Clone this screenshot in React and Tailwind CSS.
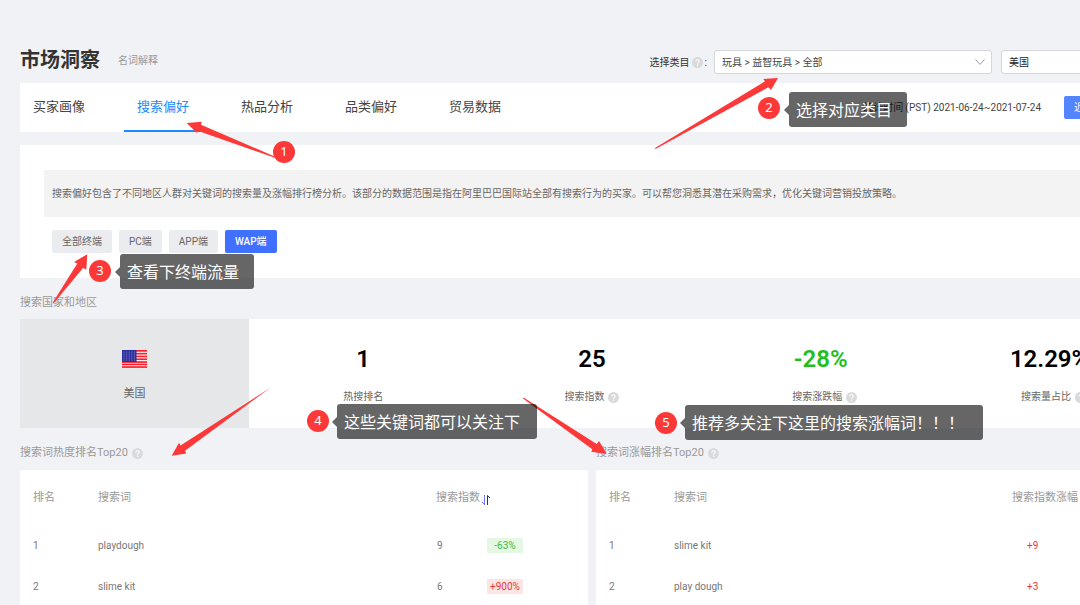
import React from "react";

const tabs = ["买家画像", "搜索偏好", "热品分析", "品类偏好", "贸易数据"];
const terminals = ["全部终端", "PC端", "APP端", "WAP端"];

const stats = [
  { value: "1", label: "热搜排名", help: false, color: "text-black", inset: "" },
  { value: "25", label: "搜索指数", help: true, color: "text-black", inset: "" },
  { value: "-28%", label: "搜索涨跌幅", help: true, color: "text-[#1fbf1f]", inset: "pl-2" },
  { value: "12.29%", label: "搜索量占比", help: true, color: "text-black", inset: "pl-2" },
];

const hotWords = [
  { rank: 1, word: "playdough", index: 9, change: "-63%", tone: "bg-[#e4f8e4] text-[#3fb83f]" },
  { rank: 2, word: "slime kit", index: 6, change: "+900%", tone: "bg-[#fde5e5] text-[#e03a3a]" },
];

const risingWords = [
  { rank: 1, word: "slime kit", change: "+9" },
  { rank: 2, word: "play dough", change: "+3" },
];

function Help() {
  return (
    <svg viewBox="0 0 12 12" className="h-[11px] w-[11px] shrink-0" aria-hidden="true">
      <circle cx="6" cy="6" r="6" fill="#d9dadc" />
      <path d="M4.2 4.8a1.8 1.7 0 1 1 2.7 1.4c-.6.35-.9.6-.9 1.2" fill="none" stroke="#fff" strokeWidth="1.1" />
      <circle cx="6" cy="9" r="0.7" fill="#fff" />
    </svg>
  );
}

function Flag() {
  return (
    <svg viewBox="0 0 25 18" className="h-[18px] w-[25px]" aria-hidden="true">
      <rect width="25" height="18" fill="#fff" />
      {[0, 2.8, 5.6, 8.4, 11.2, 13.6, 16.2].map((y) => (
        <rect key={y} y={y} width="25" height="1.7" fill="#fb1f2b" />
      ))}
      <rect width="14.5" height="12" fill="#2b2f9c" />
      {[2, 4, 6, 8, 10].map((y) =>
        [2, 4.6, 7.2, 9.8, 12.4].map((x) => (
          <circle key={x + "-" + y} cx={x} cy={y} r="0.6" fill="#8d90d8" />
        ))
      )}
    </svg>
  );
}

function Badge({ n, place }) {
  return (
    <span
      className={
        "absolute flex h-[22px] w-[22px] items-center justify-center rounded-full bg-[#fd3838] pb-[2px] font-['Noto_Sans',sans-serif] text-[13px] leading-none text-white " +
        place
      }
    >
      {n}
    </span>
  );
}

function Note({ children, place }) {
  return (
    <span
      className={
        "absolute flex h-[35px] items-center rounded-[3px] bg-black/60 pt-[2px] pl-[7px] text-[16px] leading-none whitespace-nowrap text-white " +
        place
      }
    >
      <svg viewBox="0 0 5 10" className="absolute top-[13px] -left-[5px] h-[10px] w-[5px]" aria-hidden="true">
        <path d="M5 0 0 5l5 5z" fill="#000" fillOpacity="0.6" />
      </svg>
      {children}
    </span>
  );
}

function Annotations() {
  return (
    <div className="pointer-events-none absolute top-0 left-0">
      <svg width="1080" height="605" className="absolute top-0 left-0 max-w-none" fill="#fd3838" aria-hidden="true">
        <path d="M186.7 123 201.7 121.7 201 124.7 278 158 277 158.5 199 131.3 196.7 132.7z" />
        <path d="M778 78 763.3 79 765 81.3 655 148 655.5 149 768.3 87.3 771 90z" />
        <path d="M87.3 254.3 74 262 77.3 263.5 52.5 303 53.5 303.5 83 268 86.3 269.5z" />
        <path d="M171.7 455.8 179 442.7 180.5 445.5 270.7 387.5 185 450.7 186.3 453.5z" />
        <path d="M606.7 454 599 441 596.7 444 523.5 397.500 523 398.5 592.3 449.3 591.3 451.8z" />
      </svg>
      <Badge n="1" place="top-[141px] left-[273px]" />
      <Badge n="2" place="top-[97px] left-[758px]" />
      <Badge n="3" place="top-[260px] left-[89px]" />
      <Badge n="4" place="top-[410px] left-[307px]" />
      <Badge n="5" place="top-[412px] left-[655px]" />
      <Note place="top-[92px] left-[789px] w-[118px]">选择对应类目</Note>
      <Note place="top-[254px] left-[120px] w-[134px]">查看下终端流量</Note>
      <Note place="top-[404px] left-[337px] w-[200px]">这些关键词都可以关注下</Note>
      <Note place="top-[405px] left-[685px] w-[298px]">推荐多关注下这里的搜索涨幅词！！！</Note>
    </div>
  );
}

function Header() {
  return (
    <header className="flex h-[83px] items-center justify-between pt-[41px]">
      <div className="flex items-center gap-[18px] pb-[5px]">
        <h1 className="text-[20px] leading-none font-bold text-[#333]">市场洞察</h1>
        <a href="#glossary" className="pt-[2px] text-[10px] text-[#999]">名词解释</a>
      </div>
      <div className="flex items-center gap-[9px] text-[10px] text-[#333]">
        <div className="flex items-center gap-[7px]">
          <label htmlFor="category" className="flex items-center gap-[2px]">
            选择类目
            <Help />
            <span>:</span>
          </label>
          <div className="relative">
            <select
              id="category"
              className="block h-[24px] w-[278px] appearance-none rounded-[3px] border border-[#d4d6da] bg-white pl-[7px] text-[10px] text-[#444]"
            >
              <option>玩具 &gt; 益智玩具 &gt; 全部</option>
            </select>
            <svg viewBox="0 0 10 6" className="absolute top-[9px] right-[7px] h-[6px] w-[10px]" aria-hidden="true">
              <path d="M.5.5 5 5.4 9.5.5" fill="none" stroke="#999" />
            </svg>
          </div>
        </div>
        <select
          aria-label="国家"
          className="h-[24px] w-[163px] appearance-none rounded-[3px] border border-[#d4d6da] bg-white pl-[7px] text-[10px] text-[#222]"
        >
          <option>美国</option>
        </select>
      </div>
    </header>
  );
}

function Tabs() {
  return (
    <div className="flex h-[49px] items-stretch justify-between bg-white pr-[13px]">
      <nav className="flex gap-[26px]">
        {tabs.map((t) => (
          <button
            key={t}
            className={
              t === "搜索偏好"
                ? "border-b-2 border-[#1a8cff] px-[13px] text-[13px] text-[#1a8cff]"
                : "border-b-2 border-transparent px-[13px] text-[13px] text-[#444]"
            }
          >
            {t}
          </button>
        ))}
      </nav>
      <div className="flex items-center gap-[23px] text-[10px] text-[#444]">
        <span>统计时间 (PST) 2021-06-24~2021-07-24</span>
        <button className="h-[23px] w-[87px] rounded-[2px] bg-[#5584ff] pl-[10px] text-left text-white">近30天</button>
      </div>
    </div>
  );
}

function Terminals() {
  return (
    <section className="mt-[13px] bg-white pt-[25px] pb-[25px] pl-[24px]">
      <p className="flex h-[47px] items-center bg-[#f3f3f3] pl-2 text-[10px] whitespace-nowrap text-[#666]">
        搜索偏好包含了不同地区人群对关键词的搜索量及涨幅排行榜分析。该部分的数据范围是指在阿里巴巴国际站全部有搜索行为的买家。可以帮您洞悉其潜在采购需求，优化关键词营销投放策略。
      </p>
      <div className="mt-[13px] flex gap-[7px] pl-2 text-[10px]">
        {terminals.map((t) => (
          <button
            key={t}
            className={
              t === "WAP端"
                ? "h-[23px] rounded-[2px] bg-[#4070ff] px-[10px] font-medium text-white"
                : "h-[23px] rounded-[2px] bg-[#ebecf0] px-[10px] text-[#666]"
            }
          >
            {t}
          </button>
        ))}
      </div>
    </section>
  );
}

function Stats() {
  return (
    <section>
      <h2 className="flex h-[41px] items-center pt-[10px] text-[11px] text-[#999]">搜索国家和地区</h2>
      <div className="grid h-[109px] grid-cols-5 bg-white">
        <div className="flex flex-col items-center bg-[#e6e7e9] pt-[31px] text-[11px] text-[#666]">
          <Flag />
          <span className="mt-[18px] leading-4">美国</span>
        </div>
        {stats.map((s) => (
          <div key={s.label} className="flex flex-col items-center pt-[28px]">
            <span className={"text-[24px] leading-6 font-semibold " + s.color}>{s.value}</span>
            <span className={"mt-[18px] flex items-center gap-1 text-[10px] leading-4 text-[#666] " + s.inset}>
              {s.label}
              {s.help && <Help />}
            </span>
          </div>
        ))}
      </div>
    </section>
  );
}

function SectionTitle({ children }) {
  return (
    <h2 className="flex h-[42px] items-center gap-1 pt-[9px] text-[11px] text-[#999]">
      {children}
      <Help />
    </h2>
  );
}

function HotTable() {
  return (
    <section>
      <SectionTitle>搜索词热度排名Top20</SectionTitle>
      <div className="rounded-[3px] bg-white pl-[13px]">
        <table className="w-full table-fixed text-left text-[10px] text-[#777]">
          <colgroup>
            <col className="w-[65px]" />
            <col className="w-[338px]" />
            <col className="w-[51px]" />
            <col />
          </colgroup>
          <thead>
            <tr className="h-[55px] text-[11px] text-[#999]">
              <th className="pt-[2px] font-normal">排名</th>
              <th className="pt-[2px] font-normal">搜索词</th>
              <th colSpan={2} className="pt-[2px] font-normal">
                <button className="flex items-center">
                  搜索指数
                  <svg viewBox="0 0 10 10" className="mt-[2px] ml-[1px] h-[10px] w-[10px]" fill="none" aria-hidden="true">
                    <path d="M3.5 0v10M3.5 9.500 1 7" stroke="#7376f5" />
                    <path d="M6.5 10V.5L9 3" stroke="#2c3550" />
                  </svg>
                </button>
              </th>
            </tr>
          </thead>
          <tbody>
            {hotWords.map((r) => (
              <tr key={r.rank} className="h-[41px]">
                <td>{r.rank}</td>
                <td>{r.word}</td>
                <td className="pl-[1px]">{r.index}</td>
                <td>
                  <span className={"flex h-[15px] w-[36px] items-center justify-center rounded-[1px] " + r.tone}>
                    {r.change}
                  </span>
                </td>
              </tr>
            ))}
          </tbody>
        </table>
      </div>
    </section>
  );
}

function RisingTable() {
  return (
    <section>
      <SectionTitle>搜索词涨幅排名Top20</SectionTitle>
      <div className="rounded-[3px] bg-white pl-[13px]">
        <table className="w-full table-fixed text-left text-[10px] text-[#777]">
          <colgroup>
            <col className="w-[65px]" />
            <col className="w-[338px]" />
            <col />
          </colgroup>
          <thead>
            <tr className="h-[55px] text-[11px] text-[#999]">
              <th className="pt-[2px] font-normal">排名</th>
              <th className="pt-[2px] font-normal">搜索词</th>
              <th className="pt-[2px] font-normal">搜索指数涨幅</th>
            </tr>
          </thead>
          <tbody>
            {risingWords.map((r) => (
              <tr key={r.rank} className="h-[41px]">
                <td>{r.rank}</td>
                <td>{r.word}</td>
                <td className="pl-[15px] text-[#f03434]">{r.change}</td>
              </tr>
            ))}
          </tbody>
        </table>
      </div>
    </section>
  );
}

export default function App() {
  return (
    <div className="relative h-screen overflow-hidden bg-[#f1f2f6] font-[Roboto,'Noto_Sans_CJK_SC',sans-serif]">
      <main className="min-w-[1164px] pl-5">
        <Header />
        <Tabs />
        <Terminals />
        <Stats />
        <div className="grid grid-cols-2 gap-2">
          <HotTable />
          <RisingTable />
        </div>
      </main>
      <Annotations />
    </div>
  );
}
